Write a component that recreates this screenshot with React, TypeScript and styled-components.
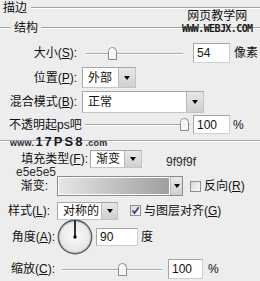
import styled, { createGlobalStyle } from 'styled-components';

const GlobalStyle = createGlobalStyle`
  html, body {
    margin: 0;
    padding: 0;
  }
  body {
    background: #ededed;
    font-family: "Liberation Sans", "Noto Sans CJK SC", sans-serif;
    font-size: 12px;
    color: #111;
  }
`

const Thumb = () => (
  <svg width="9" height="13" viewBox="0 0 9 13">
    <path d="M0.5 12.5 V4.5 Q0.5 0.5 4.5 0.5 Q8.5 0.5 8.5 4.5 V12.5 Z" fill="#f6f6f6" stroke="#8a8a8a" />
    <path d="M1.5 11.5 V4.5 Q1.5 1.5 4.5 1.5" fill="none" stroke="#ffffff" />
  </svg>
);

const Check = () => (
  <svg width="9" height="9" viewBox="0 0 9 9">
    <path d="M1.5 4.5 L3.5 7 L7.8 1.2" fill="none" stroke="#3f3f8f" strokeWidth="1.8" />
  </svg>
);

const AngleDial = () => (
  <svg width="36" height="36" viewBox="0 0 36 36">
    <defs>
      <radialGradient id="dialFill" cx="50%" cy="45%" r="55%">
        <stop offset="0%" stopColor="#fbfbfb" />
        <stop offset="100%" stopColor="#e4e4e4" />
      </radialGradient>
    </defs>
    <circle cx="18" cy="18" r="16.6" fill="url(#dialFill)" stroke="#5b626e" strokeWidth="1.6" />
    <circle cx="18" cy="18" r="15.3" fill="none" stroke="#c9ccd2" strokeWidth="0.8" />
    <line x1="18" y1="18" x2="18" y2="1.5" stroke="#000" strokeWidth="1.6" />
    <circle cx="18" cy="18" r="1.7" fill="#000" />
  </svg>
);

type Sliderprops = { w: number; ml: number; at: number };

const Slider = ({ w, ml, at }: Sliderprops) => (
  <Track $w={w} $ml={ml}>
    <ThumbSpot style={{ left: at }}>
      <Thumb />
    </ThumbSpot>
  </Track>
);

export default function App() {
  return (
    <Page>
      <GlobalStyle />

      <Row $h={16}>
        <Title $ml={3}>描边</Title>
        <Etched $ml={4} />
      </Row>
      <Row $h={24}>
        <Etched $w={11} />
        <Title $ml={3}>结构</Title>
        <Etched $ml={3} />
      </Row>

      <Row $h={20} $mt={3}>
        <Label $w={77}>大小(<U>S</U>):</Label>
        <Slider w={97} ml={9} at={22} />
        <Field $w={37} $h={20} $ml={10}>54</Field>
        <Text $ml={4}>像素</Text>
      </Row>

      <Row $h={21} $mt={4}>
        <Label $w={77}>位置(<U>P</U>):</Label>
        <Select $w={54} $h={21} $ml={5}>
          <SelectValue>外部</SelectValue>
          <Arrow $w={16} />
        </Select>
      </Row>

      <Row $h={22} $mt={3}>
        <Label $w={77}>混合模式(<U>B</U>):</Label>
        <Select $w={122} $h={22} $ml={5}>
          <SelectValue>正常</SelectValue>
          <Arrow $w={16} />
        </Select>
      </Row>

      <Row $h={19} $mt={2}>
        <Label $w={76} $ml={9} $left>不透明起ps吧</Label>
        <Slider w={105} ml={0} at={95} />
        <Field $w={37} $h={19} $ml={3}>100</Field>
        <Text $ml={3}>%</Text>
      </Row>

      <Row $h={14}>
        <Etched />
      </Row>

      <Row $h={18} $mt={2}>
        <Label $w={88}>填充类型(<U>F</U>):</Label>
        <Select $w={52} $h={18} $ml={2}>
          <SelectValue>渐变</SelectValue>
          <Arrow $w={16} />
        </Select>
      </Row>

      <Row $h={20} $mt={8}>
        <Label $w={48}>渐变:</Label>
        <GradientPicker $ml={9}>
          <GradientBar />
          <Arrow $w={11} />
        </GradientPicker>
        <Box $ml={7} />
        <Text $ml={3}>反向(<U>R</U>)</Text>
      </Row>

      <Row $h={17} $mt={6}>
        <Label $w={50}>样式(<U>L</U>):</Label>
        <Select $w={61} $h={18} $ml={7}>
          <SelectValue>对称的</SelectValue>
          <Arrow $w={15} />
        </Select>
        <Box $ml={12}>
          <Check />
        </Box>
        <Text $ml={3}>与图层对齐(<U>G</U>)</Text>
      </Row>

      <Row $h={35}>
        <Label $w={55}>角度(<U>A</U>):</Label>
        <DialWrap $ml={2}>
          <AngleDial />
        </DialWrap>
        <Field $w={42} $h={18} $ml={3}>90</Field>
        <Text $ml={3}>度</Text>
      </Row>

      <Row $h={20} $mt={5}>
        <Label $w={55}>缩放(<U>C</U>):</Label>
        <Slider w={100} ml={7} at={56} />
        <Field $w={35} $h={20} $ml={6}>100</Field>
        <Text $ml={5}>%</Text>
      </Row>

      <SiteMark>
        <SiteName>网页教学网</SiteName>
        <SiteUrl>WWW.WEBJX.COM</SiteUrl>
      </SiteMark>
      <PsMark>
        <PsSmall>www.</PsSmall>
        <PsBig>17PS8</PsBig>
        <PsSmall>.com</PsSmall>
      </PsMark>
      <ColorNote $x={16} $y={166}>e5e5e5</ColorNote>
      <ColorNote $x={166} $y={156}>9f9f9f</ColorNote>
    </Page>
  );
}

const Page = styled.div`
  position: relative;
  width: 260px;
  height: 281px;
  overflow: hidden;
  display: flex;
  flex-direction: column;
  background: #ededed;
`
const Row = styled.div<{ $h: number; $mt?: number }>`
  display: flex;
  align-items: center;
  height: ${p => p.$h}px;
  margin-top: ${p => p.$mt || 0}px;
  flex-shrink: 0;
`
const Title = styled.div<{ $ml?: number }>`
  margin-left: ${p => p.$ml || 0}px;
  line-height: 14px;
  white-space: nowrap;
`
const Etched = styled.div<{ $w?: number; $ml?: number }>`
  flex: ${p => (p.$w ? `0 0 ${p.$w}px` : '1')};
  margin-left: ${p => p.$ml || 0}px;
  height: 0;
  border-top: 1px solid #a3a3a3;
  border-bottom: 1px solid #ffffff;
`
const Label = styled.div<{ $w: number; $ml?: number; $left?: boolean }>`
  flex: 0 0 ${p => p.$w}px;
  margin-left: ${p => p.$ml || 0}px;
  text-align: ${p => (p.$left ? 'left' : 'right')};
  white-space: nowrap;
  line-height: 14px;
`
const U = styled.span`
  text-decoration: underline;
  text-underline-offset: 1px;
`
const Text = styled.div<{ $ml?: number }>`
  margin-left: ${p => p.$ml || 0}px;
  white-space: nowrap;
  line-height: 14px;
`
const Track = styled.div<{ $w: number; $ml: number }>`
  position: relative;
  flex: 0 0 ${p => p.$w}px;
  margin-left: ${p => p.$ml}px;
  height: 13px;
  &::before {
    content: '';
    position: absolute;
    left: 0;
    right: 0;
    top: 6px;
    border-top: 1px solid #a8a8a8;
    border-bottom: 1px solid #ffffff;
  }
`
const ThumbSpot = styled.div`
  position: absolute;
  top: 0;
  line-height: 0;
`
const Field = styled.div<{ $w: number; $h: number; $ml?: number }>`
  box-sizing: border-box;
  flex: 0 0 ${p => p.$w}px;
  height: ${p => p.$h}px;
  margin-left: ${p => p.$ml || 0}px;
  padding-left: 3px;
  display: flex;
  align-items: center;
  background: #ffffff;
  border: 1px solid #a6a6a6;
  border-right-color: #d0d0d0;
  border-bottom-color: #d0d0d0;
  font-family: "Liberation Sans", sans-serif;
  font-size: 12px;
`
const Select = styled.div<{ $w: number; $h: number; $ml?: number }>`
  box-sizing: border-box;
  flex: 0 0 ${p => p.$w}px;
  height: ${p => p.$h}px;
  margin-left: ${p => p.$ml || 0}px;
  display: flex;
  background: #ffffff;
  border: 1px solid #a6a6a6;
  border-right-color: #c4c4c4;
  border-bottom-color: #c4c4c4;
`
const SelectValue = styled.div`
  flex: 1;
  display: flex;
  align-items: center;
  padding-left: 5px;
  white-space: nowrap;
  line-height: 14px;
`
const Arrow = styled.div<{ $w: number }>`
  flex: 0 0 ${p => p.$w}px;
  display: flex;
  align-items: center;
  justify-content: center;
  background: linear-gradient(#e8e8e8, #cfcfcf);
  border-left: 1px solid #b8b8b8;
  &::after {
    content: '';
    border-left: 3.5px solid transparent;
    border-right: 3.5px solid transparent;
    border-top: 4px solid #000;
  }
`
const GradientPicker = styled.div<{ $ml?: number }>`
  box-sizing: border-box;
  display: flex;
  flex: 0 0 126px;
  height: 20px;
  margin-left: ${p => p.$ml || 0}px;
  border: 1px solid #8c8c8c;
  background: #ffffff;
`
const GradientBar = styled.div`
  flex: 1;
  border: 1px solid #ffffff;
  background: linear-gradient(to right, #e5e5e5, #9f9f9f);
`
const Box = styled.span<{ $ml?: number }>`
  box-sizing: border-box;
  flex: 0 0 11px;
  height: 11px;
  margin-left: ${p => p.$ml || 0}px;
  display: flex;
  align-items: center;
  justify-content: center;
  border: 1px solid #909090;
  background: linear-gradient(135deg, #d8d8d8, #fbfbfb);
`
const DialWrap = styled.div<{ $ml?: number }>`
  flex: 0 0 36px;
  height: 36px;
  margin-left: ${p => p.$ml || 0}px;
  line-height: 0;
`
const SiteMark = styled.div`
  position: absolute;
  left: 182px;
  top: 8px;
  display: flex;
  flex-direction: column;
  align-items: center;
`
const SiteName = styled.div`
  font-family: "Noto Sans CJK SC", sans-serif;
  font-size: 12px;
  line-height: 14px;
  color: #111;
`
const SiteUrl = styled.div`
  margin-top: 2px;
  font-family: "DejaVu Sans Mono", monospace;
  font-weight: bold;
  font-size: 10px;
  line-height: 9px;
  letter-spacing: -0.6px;
  color: #1a1a1a;
`
const PsMark = styled.div`
  position: absolute;
  left: 10px;
  top: 134px;
  display: flex;
  align-items: baseline;
  font-family: "Liberation Sans", sans-serif;
  font-weight: bold;
  color: #151520;
`
const PsSmall = styled.span`
  font-size: 9px;
  letter-spacing: 0.3px;
  color: #2a2a3a;
`
const PsBig = styled.span`
  font-size: 13px;
  letter-spacing: 2px;
  margin: 0 1px;
`
const ColorNote = styled.div`
  position: absolute;
  left: ${(p: { $x: number; $y: number }) => p.$x}px;
  top: ${(p: { $x: number; $y: number }) => p.$y}px;
  font-family: "Liberation Sans", sans-serif;
  font-size: 12px;
  line-height: 13px;
  color: #2b2b2b;
`
